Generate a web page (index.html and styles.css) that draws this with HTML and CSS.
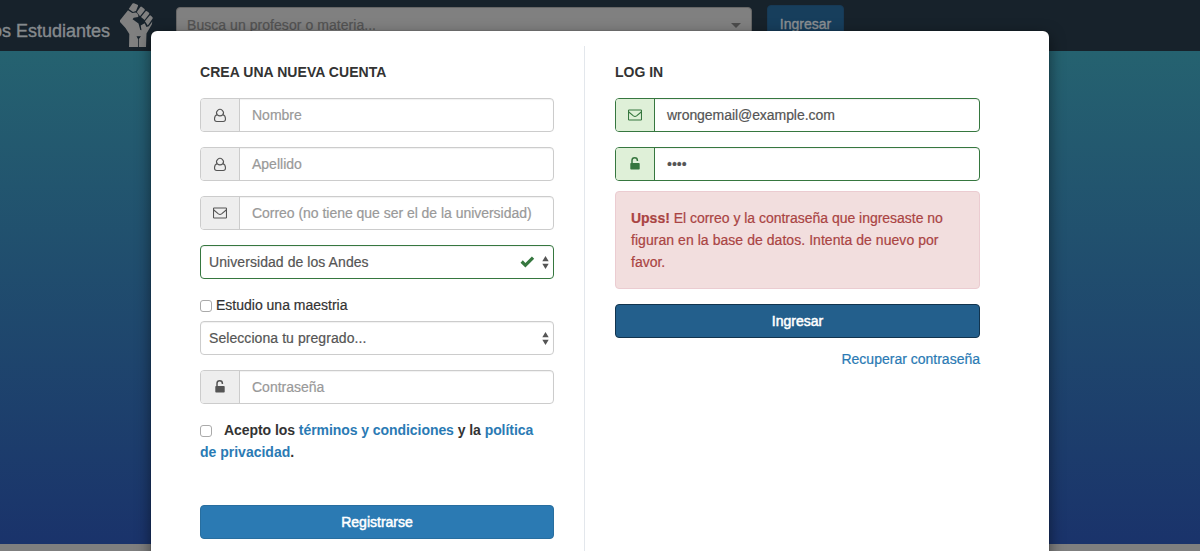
FILE: index.html
```html
<!DOCTYPE html>
<html lang="es">
<head>
<meta charset="utf-8">
<title>Los Estudiantes</title>
<link rel="stylesheet" href="styles.css">
</head>
<body>
<svg class="sprite" aria-hidden="true">
  <symbol id="user" viewBox="0 0 14 16"><path d="M4.300 7.900a3.400 3.400 0 1 1 5.400 0M4.100 7.800C2.200 8.300 1.500 10.200 1.500 12c0 1.500.9 2.500 2.300 2.500h6.400c1.400 0 2.300-1 2.300-2.500 0-1.800-.7-3.700-2.600-4.200C8 9.200 6 9.200 4.100 7.800Z" fill="none" stroke="currentColor" stroke-width="1.100"/></symbol>
  <symbol id="mail" viewBox="0 0 14 12"><rect x=".5" y="1" width="13" height="10" rx=".6" fill="none" stroke="currentColor" stroke-width="1.100"/><path d="M.8 3 5.400 6.900Q7 8.100 8.600 6.900L13.200 3" fill="none" stroke="currentColor" stroke-width="1.100"/></symbol>
  <symbol id="unlock" viewBox="0 0 10 13"><path d="M2 6.500V3.500a2.700 2.700 0 0 1 5.400 0V4" fill="none" stroke="currentColor" stroke-width="1.500"/><rect x=".3" y="6" width="9.400" height="6.500" rx=".8" fill="currentColor"/></symbol>
  <symbol id="arrows" viewBox="0 0 7 13"><path d="M3.500 0 6.700 5.300H.3ZM.3 7.700h6.400L3.500 13Z" fill="currentColor"/></symbol>
</svg>
<header class="navbar">
  <span class="brand"><span class="brand-text">Los Estudiantes</span></span>
  <svg class="fist" viewBox="0 0 33 44"><path d="M12.500.6Q13 0 14 .3L17.500 1.700Q18.300 2 18 3L16 8 13 9 8.700 6ZM20.300 4Q21 3.200 22 4L24.500 6Q25.200 6.700 24.600 7.500L20 13.200 16.800 9ZM25.600 8.200Q26.300 7.600 27 8.200L29 9.800Q29.600 10.400 29 11.300L24.600 17 21 14ZM29.700 12.500Q30.300 12 31 12.700L32.500 14.200Q33 15 32.500 15.800L27.800 22.500 24.900 18.200ZM8 7.200 12.300 10.100 16 9.400Q19 11.500 18.200 14L13.700 14.700 12.600 16.200 18.500 20.400 20.300 27 21.500 27.200 20.700 22.500 24.600 20.300 26.500 24 28.800 23.200 32.300 18.500 31.800 21.500 26.500 30.500 26 44H9L9.300 31 5.500 25 0 19V17.200ZM16.500 33.200 18 36V44H18.800V36L21 33.200Z" fill="currentColor" fill-rule="evenodd"/></svg>
  <div class="search"><span class="search-text">Busca un profesor o materia...</span><i class="caret"></i></div>
  <div class="nav-button">Ingresar</div>
</header>
<div class="hero"></div>
<main class="modal">
  <section class="register">
    <h1 class="title t-create">CREA UNA NUEVA CUENTA</h1>
    <div class="field"><span class="addon"><svg class="user"><use href="#user"/></svg></span><span class="input muted">Nombre</span></div>
    <div class="field"><span class="addon"><svg class="user"><use href="#user"/></svg></span><span class="input muted">Apellido</span></div>
    <div class="field"><span class="addon"><svg class="mail"><use href="#mail"/></svg></span><span class="input muted t-mail">Correo (no tiene que ser el de la universidad)</span></div>
    <div class="field select valid"><span class="select-text">Universidad de los Andes</span><svg class="check" viewBox="0 0 15 12"><path d="M.5 6.700 2.800 4.300 5.400 6.900 11.900.4 14.200 2.700 5.400 11.600Z" fill="currentColor"/></svg><svg class="arrows"><use href="#arrows"/></svg></div>
    <label class="option"><i class="box"></i><span>Estudio una maestria</span></label>
    <div class="field select"><span class="select-text">Selecciona tu pregrado...</span><svg class="arrows"><use href="#arrows"/></svg></div>
    <div class="field"><span class="addon"><svg class="unlock"><use href="#unlock"/></svg></span><span class="input muted">Contraseña</span></div>
    <div class="terms"><i class="box"></i><b class="terms-text">Acepto los <a>términos y condiciones</a> y la <a>política</a></b><br><b><a>de privacidad</a>.</b></div>
    <div class="button">Registrarse</div>
  </section>
  <section class="login">
    <h1 class="title">LOG IN</h1>
    <div class="field valid"><span class="addon"><svg class="mail"><use href="#mail"/></svg></span><span class="input t-address">wrongemail@example.com</span></div>
    <div class="field valid"><span class="addon"><svg class="unlock"><use href="#unlock"/></svg></span><span class="input password">••••</span></div>
    <div class="alert"><span class="alert-1"><b>Upss!</b> El correo y la contraseña que ingresaste no</span><br><span class="alert-2">figuran en la base de datos. Intenta de nuevo por</span><br>favor.</div>
    <div class="button pressed">Ingresar</div>
    <a class="recover">Recuperar contraseña</a>
  </section>
</main>
</body>
</html>
```
FILE: styles.css
```css
* { box-sizing: border-box; }
body { margin: 0; width: 1200px; height: 551px; overflow: hidden; background: #7f7f7f; color: #333; font: 14px/22px "Liberation Sans", Arial, sans-serif; white-space: nowrap; -webkit-text-stroke: .2px currentColor; }
svg { display: block; flex: none; }
.sprite { position: absolute; width: 0; height: 0; }
.navbar { height: 51px; background: #17222b; color: #858a8d; display: flex; align-items: flex-start; overflow: hidden; }
.brand { width: 110px; display: flex; justify-content: flex-end; padding-top: 20px; font-size: 18px; -webkit-text-stroke-width: .4px; }
.brand-text { letter-spacing: 0; }
.fist { width: 33px; height: 44px; margin: 3px 0 0 10px; color: #808080; }
.search { width: 576px; height: 34px; margin: 7px 0 0 23px; border: 1px solid #666; border-radius: 4px; background: #808080; color: #535353; padding: 6px 10px; display: flex; justify-content: space-between; }
.search-text { letter-spacing: .05px; }
.caret { border: 5px solid transparent; border-top-color: #4c4c4c; border-bottom: 0; margin-top: 9px; }
.nav-button { width: 77px; height: 34px; margin: 5px 0 0 15px; border-radius: 4px; background: #173e5c; border: 1px solid #173955; color: #8b8f92; padding-top: 7px; text-align: center; -webkit-text-stroke-width: .4px; }
.hero { height: 493px; background: linear-gradient(#256270, #1a336b); }
.modal { position: absolute; left: 151px; top: 31px; width: 898px; height: 540px; background: #fff; border-radius: 6px 6px 0 0; box-shadow: 0 5px 15px rgba(0,0,0,.5), 0 0 1px rgba(0,0,0,.7); display: flex; padding-top: 15px; }
.register { width: 434px; border-right: 1px solid #e3e7ec; padding: 15px 30px 0 49px; }
.login { width: 395px; padding: 15px 0 0 30px; }
.title { margin: 0 0 15px; font-size: 14px; line-height: 22px; font-weight: bold; -webkit-text-stroke-width: 0; }
.t-create { letter-spacing: .05px; }
.field { height: 34px; margin-bottom: 15px; border: 1px solid #ccc; border-radius: 4px; display: flex; color: #555; box-shadow: inset 0 1px 1px rgba(0,0,0,.06); }
.addon { width: 39px; background: #eee; border-right: 1px solid #ccc; border-radius: 3px 0 0 3px; display: flex; align-items: center; justify-content: center; }
.input { padding: 5px 12px; letter-spacing: 0; }
.t-mail { letter-spacing: -.03px; }
.t-address { letter-spacing: -.06px; }
.muted { color: #999; }
.valid { border-color: #36773f; }
.valid .addon { background: #dff0d8; border-color: #36773f; color: #36773f; }
.user { width: 14px; height: 16px; }
.mail { width: 14px; height: 12px; }
.unlock { width: 10px; height: 13px; margin-bottom: 2px; }
.select { align-items: center; padding: 0 4px 0 8px; }
.select-text { flex: 1; letter-spacing: .07px; }
.arrows { width: 7px; height: 13px; }
.check { width: 15px; height: 12px; color: #36773f; margin-right: 7px; }
.option { height: 22px; margin: 0 0 5px; display: flex; align-items: center; gap: 4px; }
.box { display: inline-block; width: 12px; height: 12px; border: 1px solid #aaa; border-radius: 3px; background: #fff; }
.option .box { margin-top: 1px; }
.terms { height: 86px; -webkit-text-stroke-width: 0; }
.terms .box { vertical-align: -2px; margin-right: 12px; }
.terms-text { letter-spacing: -.06px; }
a { color: #2a7ab4; }
.button { height: 34px; border: 1px solid #286e9f; border-radius: 4px; background: #2b7ab3; color: #fff; text-align: center; padding-top: 5px; -webkit-text-stroke-width: .5px; }
.pressed { background: #235f8c; border-color: #12344e; }
.login .field + .alert { margin-top: -5px; }
.alert { height: 98px; border: 1px solid #ebccd1; border-radius: 4px; background: #f2dede; color: #aa4443; padding: 15px; margin-bottom: 15px; }
.alert-1 { letter-spacing: -.02px; }
.alert-2 { letter-spacing: .05px; }
.recover { display: block; text-align: right; margin-top: 10px; }
.password { font-size: 14px; }
```
